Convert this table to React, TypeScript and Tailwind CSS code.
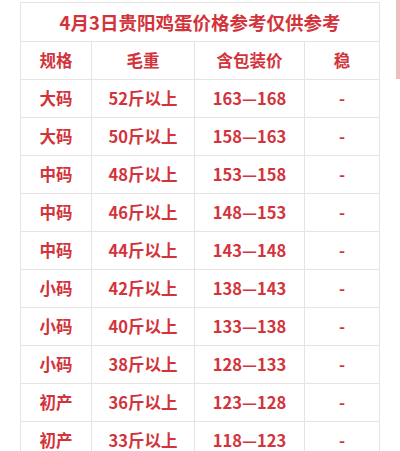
import React from "react";

const rows: [string, string, string][] = [
  ["大码", "52斤以上", "163—168"],
  ["大码", "50斤以上", "158—163"],
  ["中码", "48斤以上", "153—158"],
  ["中码", "46斤以上", "148—153"],
  ["中码", "44斤以上", "143—148"],
  ["小码", "42斤以上", "138—143"],
  ["小码", "40斤以上", "133—138"],
  ["小码", "38斤以上", "128—133"],
  ["初产", "36斤以上", "123—128"],
  ["初产", "33斤以上", "118—123"],
];

const cell =
  "flex items-center justify-center border-r border-b border-[#e7e3e3] h-[38px]";

export default function App() {
  return (
    <div
      className="relative w-[400px] h-[451px] overflow-hidden bg-white text-[#d3333b] font-bold"
      style={{ fontFamily: '"Noto Sans CJK SC", "Noto Sans", sans-serif' }}
    >
      <div className="ml-[20px] mt-[2px] w-[360px] border-l border-t border-[#e7e3e3]">
        <div className="flex items-center justify-center h-[39px] border-r border-b border-[#e7e3e3] text-[18.5px] leading-none">
          4月3日贵阳鸡蛋价格参考仅供参考
        </div>
        <div className="grid grid-cols-[71px_103px_110px_75px] text-[16.5px] leading-none">
          <div className={cell}>规格</div>
          <div className={cell}>毛重</div>
          <div className={cell}>含包装价</div>
          <div className={cell}>稳</div>
          {rows.map((r, i) => (
            <React.Fragment key={i}>
              <div className={cell}>{r[0]}</div>
              <div className={cell}>{r[1]}</div>
              <div className={cell}>{r[2]}</div>
              <div className={cell}>-</div>
            </React.Fragment>
          ))}
        </div>
      </div>
      <div className="absolute right-0 top-0 w-[4px] h-[79px] bg-[#efbcbc]" />
    </div>
  );
}
